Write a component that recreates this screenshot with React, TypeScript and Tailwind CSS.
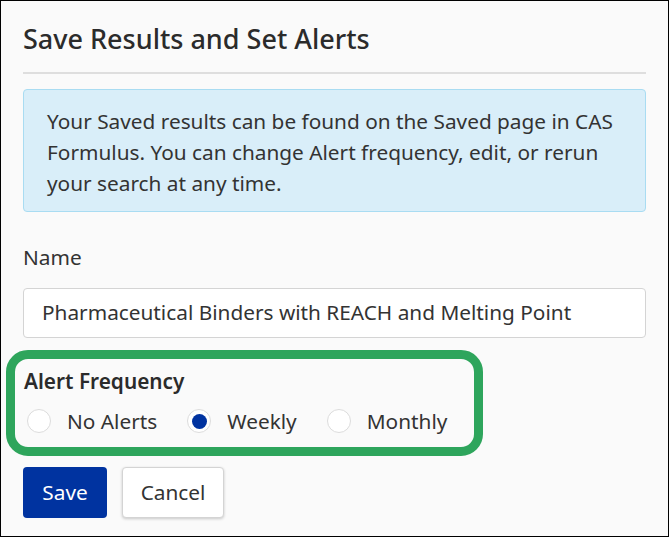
const options = [
  { value: 'none', label: 'No Alerts' },
  { value: 'weekly', label: 'Weekly' },
  { value: 'monthly', label: 'Monthly' },
]

function Radio({ checked }: { checked: boolean }) {
  return (
    <span className="flex h-6 w-6 shrink-0 items-center justify-center rounded-full border border-[#dcdcdc] bg-white">
      {checked && <span className="h-[15px] w-[15px] rounded-full bg-[#0033a0]" />}
    </span>
  )
}

export default function App() {
  const selected = 'weekly'

  return (
    <div
      className="h-[537px] w-[669px] border border-black bg-[#fafafa] text-[#333]"
      style={{ fontFamily: '"Noto Sans", "Open Sans", sans-serif' }}
    >
      <div className="px-[22px] pt-[20px]">
        <h2 className="text-[27px] font-medium leading-[36px] text-[#2b2b2b]">
          Save Results and Set Alerts
        </h2>
        <div className="mt-[15px] h-[2px] bg-[#dedede]" />

        <div className="mt-[15px] rounded-[4px] border border-[#a9dcf2] bg-[#d9eef9] px-[23px] pb-[12px] pt-[16px] text-[20.8px] leading-[31px]">
          Your Saved results can be found on the Saved page in CAS Formulus. You can change Alert
          frequency, edit, or rerun your search at any time.
        </div>

        <label className="mt-[30px] block text-[20.8px] leading-[30px]">Name</label>
        <div className="mt-[16px] flex h-[50px] items-center rounded-[4px] border border-[#d4d4d4] bg-white px-[18px] text-[20.8px]">
          Pharmaceutical Binders with REACH and Melting Point
        </div>
      </div>

      <div className="ml-[5px] mt-[12px] w-[477px] rounded-[22px] border-[9px] border-[#2ea55c] pb-[11px] pl-[9px] pr-[9px] pt-[7px]">
        <div className="text-[20.8px] font-semibold leading-[30px] text-[#2b2b2b]">Alert Frequency</div>
        <div className="ml-[3px] mt-[10px] flex items-center gap-[30px]">
          {options.map((o) => (
            <div key={o.value} className="flex items-center gap-[16px] text-[20.8px] leading-[30px]">
              <Radio checked={o.value === selected} />
              <span>{o.label}</span>
            </div>
          ))}
        </div>
      </div>

      <div className="ml-[22px] mt-[11px] flex gap-[15px]">
        <button className="h-[51px] w-[84px] rounded-[4px] bg-[#0033a0] text-[20.8px] text-white">
          Save
        </button>
        <button className="h-[51px] w-[102px] rounded-[4px] border border-[#d4d4d4] bg-white text-[20.8px] text-[#333] shadow-[0_1px_3px_rgba(0,0,0,0.2)]">
          Cancel
        </button>
      </div>
    </div>
  )
}
